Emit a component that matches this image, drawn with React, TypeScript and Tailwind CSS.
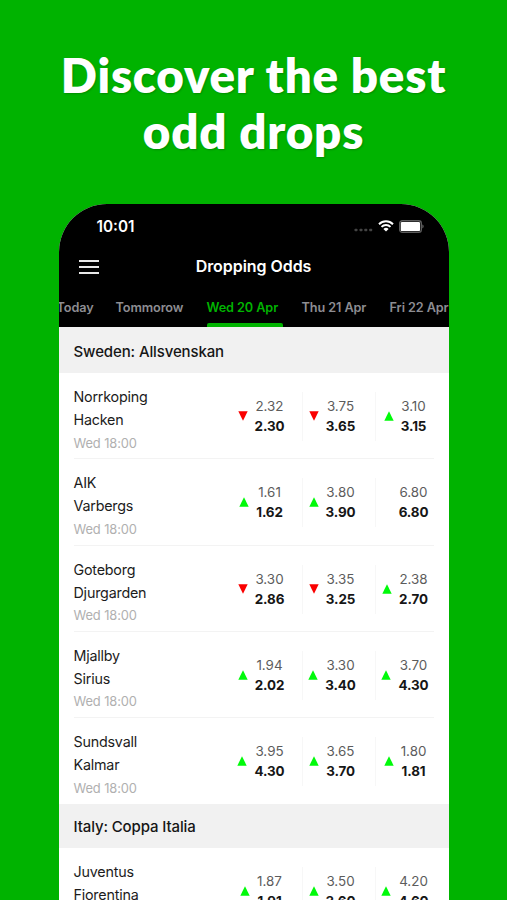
type Odd = { from: string; to: string; trend?: 'up' | 'down' };
type Match = { home: string; away: string; time: string; odds: Odd[] };

const tabs = [
  { label: 'Today', width: 'w-[36px]' },
  { label: 'Tommorow', width: 'w-[68px]' },
  { label: 'Wed 20 Apr', width: 'w-[72px]', active: true },
  { label: 'Thu 21 Apr', width: 'w-[65px]' },
  { label: 'Fri 22 Apr', width: 'w-[61px]' },
];

const leagues: { name: string; matches: Match[] }[] = [
  {
    name: 'Sweden: Allsvenskan',
    matches: [
      {
        home: 'Norrkoping',
        away: 'Hacken',
        time: 'Wed 18:00',
        odds: [
          { from: '2.32', to: '2.30', trend: 'down' },
          { from: '3.75', to: '3.65', trend: 'down' },
          { from: '3.10', to: '3.15', trend: 'up' },
        ],
      },
      {
        home: 'AIK',
        away: 'Varbergs',
        time: 'Wed 18:00',
        odds: [
          { from: '1.61', to: '1.62', trend: 'up' },
          { from: '3.80', to: '3.90', trend: 'up' },
          { from: '6.80', to: '6.80' },
        ],
      },
      {
        home: 'Goteborg',
        away: 'Djurgarden',
        time: 'Wed 18:00',
        odds: [
          { from: '3.30', to: '2.86', trend: 'down' },
          { from: '3.35', to: '3.25', trend: 'down' },
          { from: '2.38', to: '2.70', trend: 'up' },
        ],
      },
      {
        home: 'Mjallby',
        away: 'Sirius',
        time: 'Wed 18:00',
        odds: [
          { from: '1.94', to: '2.02', trend: 'up' },
          { from: '3.30', to: '3.40', trend: 'up' },
          { from: '3.70', to: '4.30', trend: 'up' },
        ],
      },
      {
        home: 'Sundsvall',
        away: 'Kalmar',
        time: 'Wed 18:00',
        odds: [
          { from: '3.95', to: '4.30', trend: 'up' },
          { from: '3.65', to: '3.70', trend: 'up' },
          { from: '1.80', to: '1.81', trend: 'up' },
        ],
      },
    ],
  },
  {
    name: 'Italy: Coppa Italia',
    matches: [
      {
        home: 'Juventus',
        away: 'Fiorentina',
        time: 'Wed 18:00',
        odds: [
          { from: '1.87', to: '1.91', trend: 'up' },
          { from: '3.50', to: '3.60', trend: 'up' },
          { from: '4.20', to: '4.60', trend: 'up' },
        ],
      },
    ],
  },
];

const columns = [
  'w-[73px] pr-[8px]',
  'w-[73px] pr-[13px] border-l border-[#f7f7f7]',
  'w-[60px] border-l border-[#f7f7f7]',
];

function Trend({ trend }: { trend?: 'up' | 'down' }) {
  return (
    <svg width="10" height="10" viewBox="0 0 10 10" className="shrink-0">
      {trend === 'up' && <path d="M5 0.3L9.7 9.7H0.3Z" fill="#00fa0a" />}
      {trend === 'down' && <path d="M0.3 0.3H9.7L5 9.7Z" fill="#fa0000" />}
    </svg>
  );
}

function StatusBar() {
  return (
    <div className="flex h-[44px] items-center justify-between pl-[38px] pr-[24px]">
      <span className="pt-[2px] text-[15.3px] font-semibold text-white">10:01</span>
      <div className="flex items-center">
        <svg width="19" height="12" viewBox="0 0 19 12">
          <g fill="#444">
            <rect x="0.5" y="8.8" width="3" height="2.5" rx="0.7" />
            <rect x="5.5" y="8.8" width="3" height="2.5" rx="0.7" />
            <rect x="10.3" y="8.8" width="3" height="2.5" rx="0.7" />
            <rect x="15.2" y="8.8" width="3" height="2.5" rx="0.7" />
          </g>
        </svg>
        <svg width="16" height="12" viewBox="0 0 16 12" className="ml-[5px]">
          <g fill="none" stroke="#fff" strokeWidth="2">
            <path d="M1 4.2A10 10 0 0 1 15 4.2" />
            <path d="M3.5 6.9A6.4 6.4 0 0 1 12.5 6.9" />
          </g>
          <path d="M5.4 8.9A3.8 3.8 0 0 1 10.6 8.9L8 11.6Z" fill="#fff" />
        </svg>
        <svg width="26" height="13" viewBox="0 0 26 13" className="ml-[5px]">
          <rect x="0.7" y="0.7" width="21.6" height="11.6" rx="2.6" fill="none" stroke="#5c5c5c" strokeWidth="1.4" />
          <rect x="1.8" y="1.9" width="19.2" height="9.2" rx="1.2" fill="#fff" />
          <path d="M23.2 4.6C25.3 5.2 25.3 7.8 23.2 8.4Z" fill="#555" />
        </svg>
      </div>
    </div>
  );
}

function MatchRow({ match, last }: { match: Match; last: boolean }) {
  return (
    <div className="px-[15px]">
      <div className={`flex h-[86.25px] justify-between border-b ${last ? 'border-transparent' : 'border-[#f3f3f3]'}`}>
        <div className="pt-[12px] text-[14.3px] leading-[23px] tracking-[-0.2px] text-[#1c1c1c]">
          <p>{match.home}</p>
          <p>{match.away}</p>
          <p className="pt-[0.6px] text-[12.9px] tracking-[-0.1px] text-[#b0b0b0]">{match.time}</p>
        </div>
        <div className="-mr-px flex pt-[19px]">
          {match.odds.map((odd, i) => (
            <div key={i} className={`flex h-[49px] items-center justify-center gap-[7px] pb-px ${columns[i]}`}>
              <Trend trend={odd.trend} />
              <div className="text-center text-[13.4px] leading-[20px]">
                <p className="text-[#5c5c5c]">{odd.from}</p>
                <p className="font-bold tracking-[-0.1px] text-[#161616]">{odd.to}</p>
              </div>
            </div>
          ))}
        </div>
      </div>
    </div>
  );
}

export default function App() {
  return (
    <div className="flex h-[900px] w-[507px] flex-col items-center overflow-hidden bg-[#00b300] font-['Inter',sans-serif]">
      <h1 className="h-[204px] shrink-0 pt-[47px] text-center font-['Lato',sans-serif] text-[47.5px] font-extrabold leading-[55.5px] tracking-[0.8px] text-white [text-shadow:1px_1px_2px_rgba(0,0,0,0.22)]">
        Discover the best
        <br />
        odd drops
      </h1>

      <div className="w-[390px] grow overflow-hidden rounded-t-[48px] bg-white">
        <header className="h-[123px] bg-black">
          <StatusBar />
          <div className="flex h-[37px] items-center px-[20px]">
            <svg width="20" height="16" viewBox="0 0 20 16" className="shrink-0">
              <path d="M0 2H20M0 8H20M0 14H20" stroke="#e8e8e8" strokeWidth="2" />
            </svg>
            <h2 className="grow pb-[2px] pr-[20px] text-center text-[16px] font-semibold tracking-[-0.05px] text-white">
              Dropping Odds
            </h2>
          </div>
          <nav className="flex h-[42px] gap-[23px] overflow-hidden text-[12.7px] font-semibold text-[#8d8d92]">
            {tabs.map((tab) => (
              <div
                key={tab.label}
                className={`flex shrink-0 flex-col justify-between whitespace-nowrap pt-[13px] first:-ml-[2px] ${tab.width} ${tab.active ? 'text-[#00b300]' : ''}`}
              >
                <span className="leading-[20px] tracking-[-0.1px]">{tab.label}</span>
                {tab.active && <span className="h-[4px] w-[76px] rounded-t-[2px] bg-[#00b300]" />}
              </div>
            ))}
          </nav>
        </header>

        {leagues.map((league, i) => (
          <section key={league.name}>
            <h3
              className={`flex items-center bg-[#f1f1f1] pl-[15px] text-[15px] font-medium tracking-[-0.12px] text-[#161616] ${i === 0 ? 'h-[46px] pt-[4px]' : 'h-[44px] pt-[2px]'}`}
            >
              {league.name}
            </h3>
            {league.matches.map((match, j) => (
              <MatchRow key={match.home} match={match} last={j === league.matches.length - 1} />
            ))}
          </section>
        ))}
      </div>
    </div>
  );
}
